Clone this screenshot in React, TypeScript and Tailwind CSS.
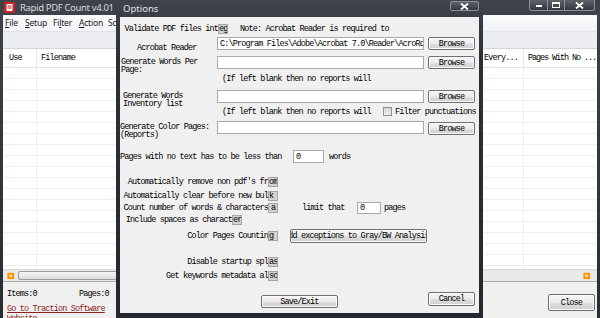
import React from "react";

const mono =
  "font-['Liberation_Mono',monospace] text-[8.5px] tracking-[-0.85px] text-[#000] whitespace-nowrap leading-[8px]";
const sans = "font-['Noto_Sans',sans-serif]";
const btn =
  "flex items-center justify-center overflow-hidden rounded-[2px] border border-[#707070] bg-[linear-gradient(to_bottom,#f5f5f5_0%,#ececec_50%,#dedede_51%,#d0d0d0_100%)] shadow-[inset_0_0_0_1px_#fbfbfb]";
const input = "flex items-center overflow-hidden bg-white border border-[#a6a9ae] px-[2px]";

function Box({ children }: { children: React.ReactNode }) {
  return (
    <span className="inline-flex h-[10px] w-[10px] items-center justify-start overflow-hidden bg-[#d3d3d3] border border-[#a4a4a4] align-middle">
      {children}
    </span>
  );
}

function CaptionX() {
  return (
    <svg width="9" height="7" viewBox="0 0 9 7">
      <path d="M1 0.5 L8 6.5 M8 0.5 L1 6.5" stroke="#fff" strokeWidth="1.8" />
    </svg>
  );
}

function MainWindow() {
  const rows = Array.from({ length: 19 });
  return (
    <div className="absolute left-0 top-0 w-[600px] h-[340px] flex flex-col bg-[linear-gradient(to_bottom,#3d424b,#262a31)]">
      {/* title bar */}
      <div className="relative h-[15px] shrink-0 flex items-center">
        <svg className="ml-[4px]" width="11" height="11" viewBox="0 0 11 11">
          <rect x="0" y="0" width="11" height="11" rx="1" fill="#c8242a" />
          <rect x="2.5" y="2" width="6" height="7" fill="#f4f4f4" />
          <rect x="3.5" y="3.5" width="4" height="1" fill="#c8242a" />
          <rect x="3.5" y="5.5" width="4" height="1" fill="#c8242a" />
        </svg>
        <span className={`${sans} ml-[5px] text-[9.5px] leading-none text-[#d9dbde] tracking-[-0.35px]`}>
          Rapid PDF Count v4.01
        </span>
        <div className="absolute right-[5px] top-0 h-[11px] flex rounded-b-[3px] border border-t-0 border-[#8b9099] overflow-hidden bg-[linear-gradient(to_bottom,#5d626b,#33373f)]">
          <div className="w-[18px] flex items-end justify-center pb-[3px] border-r border-[#8b9099]">
            <div className="w-[6px] h-[2px] bg-white" />
          </div>
          <div className="w-[17px] flex items-center justify-center border-r border-[#8b9099]">
            <div className="w-[8px] h-[6px] border border-white border-t-2" />
          </div>
          <div className="w-[29px] flex items-center justify-center">
            <CaptionX />
          </div>
        </div>
      </div>
      {/* client */}
      <div className="mx-[3px] flex-1 flex flex-col bg-[#f0f0f0]">
        {/* menu */}
        <div className={`${sans} h-[16px] shrink-0 flex items-center text-[8.5px] tracking-[-0.2px] leading-none text-[#1b1b1b] bg-[linear-gradient(to_bottom,#fbfbfc,#f0f2f5)]`}>
          <span className="ml-[2px] w-[20px]"><u>F</u>ile</span>
          <span className="w-[28px]"><u>S</u>etup</span>
          <span className="w-[26px]">Fi<u>l</u>ter</span>
          <span className="w-[29px]"><u>A</u>ction</span>
          <span>Sc</span>
        </div>
        {/* toolbar */}
        <div className="h-[17px] shrink-0 border-t border-[#dfe2e6] bg-[#eceef1]" />
        {/* list */}
        <div className="h-[221px] shrink-0 bg-white flex flex-col overflow-hidden border-t border-[#d5d5d5]">
          <div className="h-[19px] shrink-0 flex border-b border-[#e2e2e2]">
            <div className="w-[34px] flex items-center pl-[6px] border-r border-[#e6e6e6]">
              <span className={mono}>Use</span>
            </div>
            <div className="w-[443px] flex items-center pl-[4px] border-r border-[#e6e6e6]">
              <span className={mono}>Filename</span>
            </div>
            <div className="w-[44px] flex items-center pl-[4px] border-r border-[#e6e6e6]">
              <span className={mono}>Every...</span>
            </div>
            <div className="flex-1 flex items-center pl-[4px] overflow-hidden">
              <span className={`${mono} tracking-[-1.1px]`}>Pages With No ...</span>
            </div>
          </div>
          {rows.map((_, i) => (
            <div key={i} className="h-[11px] shrink-0 flex border-b border-[#efefef]">
              <div className="w-[34px] border-r border-[#efefef]" />
              <div className="w-[443px] border-r border-[#efefef]" />
              <div className="w-[44px] border-r border-[#efefef]" />
              <div className="flex-1" />
            </div>
          ))}
        </div>
        {/* horizontal scrollbar */}
        <div className="h-[12px] shrink-0 flex items-center bg-[#e9e9e9] border-t border-[#dadada]">
          <span className="ml-[4px] text-[6px] leading-none text-[#555]">◀</span>
          <div className="ml-[4px] h-[9px] w-[300px] rounded-[2px] border border-[#9c9c9c] bg-[linear-gradient(to_bottom,#f6f6f6,#dcdcdc)]" />
          <div className="flex-1" />
          <span className="mr-[6px] text-[6px] leading-none text-[#555]">▶</span>
        </div>
        {/* status */}
        <div className="flex-1 flex border-t border-[#a9a9a9] bg-[#f0f0f0]">
          <div className="flex flex-col pl-[4px] pt-[7px]">
            <div className="flex h-[10px] items-center">
              <span className={`${mono} w-[72px]`}>Items:0</span>
              <span className={mono}>Pages:0</span>
            </div>
            <div className="mt-[5px] flex flex-col">
              <span className={`${mono} leading-[10px] text-[#8c1f1f] underline decoration-[#8c1f1f]`}>Go to Traction Software</span>
              <span className={`${mono} leading-[10px] text-[#8c1f1f] underline decoration-[#8c1f1f]`}>Website</span>
            </div>
          </div>
          <div className="flex-1" />
          <div className={`${btn} mt-[12px] mr-[2px] w-[47px] h-[17px]`}>
            <span className={mono}>Close</span>
          </div>
        </div>
      </div>
    </div>
  );
}

function OptionsDialog() {
  return (
    <div className="absolute left-[116px] top-0 w-[367px] h-[330px] flex flex-col bg-[linear-gradient(to_bottom,#3e434c,#2b2f37_60px,#24272e)]">
      <div className="relative h-[17px] shrink-0 flex items-center">
        <span className={`${sans} ml-[7px] text-[9.5px] leading-none text-[#e2e4e7]`}>Options</span>
        <div className="absolute right-[4px] top-[1px] w-[29px] h-[10px] flex items-center justify-center rounded-[2px] border border-[#8b9099] bg-[linear-gradient(to_bottom,#5d626b,#33373f)]">
          <CaptionX />
        </div>
      </div>
      <div className="mx-[4px] h-[296px] shrink-0 flex flex-col bg-[#f0f0f0]">
        {/* A */}
        <div className="mt-[6px] h-[12px] flex items-center">
          <div className="w-[108px] flex justify-end">
            <span className={mono}>
              Validate PDF files int<Box>eg</Box>
            </span>
          </div>
          <span className={`${mono} ml-[12px]`}>Note: Acrobat Reader is required to</span>
        </div>
        {/* B */}
        <div className="mt-[2px] h-[13px] flex items-center">
          <div className="w-[97px] pl-[17px]">
            <span className={mono}>Acrobat Reader</span>
          </div>
          <div className={`${input} w-[207px] h-[13px]`}>
            <span className={mono}>C:\Program Files\Adobe\Acrobat 7.0\Reader\AcroRd</span>
          </div>
          <div className={`${btn} ml-[4px] w-[47px] h-[13px]`}>
            <span className={mono}>Browse</span>
          </div>
        </div>
        {/* C */}
        <div className="mt-[6px] h-[13px] flex items-start">
          <div className="w-[97px] pl-[1px] mt-[2px] flex flex-col">
            <span className={mono}>Generate Words Per</span>
            <span className={mono}>Page:</span>
          </div>
          <div className={`${input} w-[207px] h-[13px]`} />
          <div className={`${btn} ml-[4px] w-[47px] h-[13px]`}>
            <span className={mono}>Browse</span>
          </div>
        </div>
        {/* D */}
        <div className="mt-[5px] h-[9px] flex items-center pl-[102px]">
          <span className={mono}>(If left blank then no reports will</span>
        </div>
        {/* E */}
        <div className="mt-[7px] h-[13px] flex items-start">
          <div className="w-[97px] pl-[3px] mt-[2px] flex flex-col">
            <span className={mono}>Generate Words</span>
            <span className={mono}>Inventory list</span>
          </div>
          <div className={`${input} w-[207px] h-[13px]`} />
          <div className={`${btn} ml-[4px] w-[47px] h-[13px]`}>
            <span className={mono}>Browse</span>
          </div>
        </div>
        {/* F */}
        <div className="mt-[4px] h-[9px] flex items-center pl-[102px]">
          <span className={`${mono} w-[161px]`}>(If left blank then no reports will</span>
          <div className="w-[9px] h-[9px] border border-[#8f8f8f] bg-[linear-gradient(to_bottom,#d8d8d8,#eeeeee)]" />
          <span className={`${mono} ml-[3px]`}>Filter punctuations</span>
        </div>
        {/* G */}
        <div className="mt-[5px] h-[13px] flex items-start">
          <div className="w-[97px] mt-[2px] flex flex-col">
            <span className={mono}>Generate Color Pages:</span>
            <span className={mono}>(Reports)</span>
          </div>
          <div className={`${input} w-[207px] h-[13px]`} />
          <div className={`${btn} ml-[4px] mt-[1px] w-[47px] h-[13px]`}>
            <span className={mono}>Browse</span>
          </div>
        </div>
        {/* H */}
        <div className="mt-[16px] h-[13px] flex items-center">
          <span className={`${mono} w-[173px]`}>Pages with no text has to be less than</span>
          <div className={`${input} w-[31px] h-[13px]`}>
            <span className={mono}>0</span>
          </div>
          <span className={`${mono} ml-[5px]`}>words</span>
        </div>
        {/* I */}
        <div className="mt-[13px] h-[11px] flex items-center">
          <div className="w-[158px] flex justify-end">
            <span className={mono}>
              Automatically remove non pdf's fr<Box>om</Box>
            </span>
          </div>
        </div>
        {/* J */}
        <div className="mt-[3px] h-[11px] flex items-center">
          <div className="w-[158px] flex justify-end">
            <span className={mono}>
              Automatically clear before new bul<Box>k</Box>
            </span>
          </div>
        </div>
        {/* K */}
        <div className="h-[13px] flex items-center">
          <div className="w-[158px] flex justify-end">
            <span className={mono}>
              Count number of words &amp; characters<Box><span className="pl-[2px]">a</span></Box>
            </span>
          </div>
          <span className={`${mono} ml-[24px] w-[55px]`}>limit that</span>
          <div className={`${input} w-[24px] h-[12px]`}>
            <span className={mono}>0</span>
          </div>
          <span className={`${mono} ml-[3px]`}>pages</span>
        </div>
        {/* L */}
        <div className="h-[11px] flex items-center">
          <div className="w-[122px] flex justify-end">
            <span className={mono}>
              Include spaces as charact<Box>er</Box>
            </span>
          </div>
        </div>
        {/* M */}
        <div className="mt-[4px] h-[14px] flex items-center">
          <div className="w-[158px] flex justify-end">
            <span className={mono}>
              Color Pages Countin<Box>g</Box>
            </span>
          </div>
          <div className={`${btn} ml-[12px] w-[137px] h-[14px]`}>
            <span className={mono}>Add exceptions to Gray/BW Analysis:</span>
          </div>
        </div>
        {/* N */}
        <div className="mt-[13px] h-[11px] flex items-center">
          <div className="w-[158px] flex justify-end">
            <span className={mono}>
              Disable startup spl<Box>as</Box>
            </span>
          </div>
        </div>
        {/* O */}
        <div className="mt-[3px] h-[11px] flex items-center">
          <div className="w-[158px] flex justify-end">
            <span className={mono}>
              Get keywords metadata al<Box>so</Box>
            </span>
          </div>
        </div>
        {/* P */}
        <div className="mt-[11px] h-[16px] flex items-start">
          <div className={`${btn} ml-[141px] mt-[3px] w-[77px] h-[13px]`}>
            <span className={mono}>Save/Exit</span>
          </div>
          <div className="flex-1" />
          <div className={`${btn} mr-[4px] w-[47px] h-[14px]`}>
            <span className={mono}>Cancel</span>
          </div>
        </div>
      </div>
    </div>
  );
}

export default function App() {
  return (
    <div className="relative w-[600px] h-[318px] overflow-hidden bg-[#1e2127]">
      <MainWindow />
      <OptionsDialog />
    </div>
  );
}
